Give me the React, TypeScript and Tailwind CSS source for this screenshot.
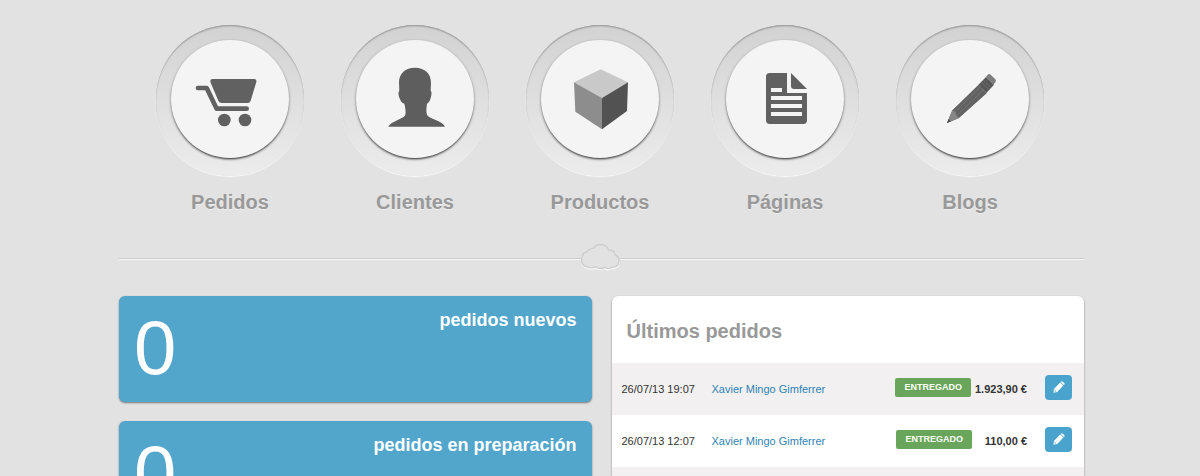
import type { ReactNode } from 'react';

const CartIcon = () => (
  <svg viewBox="63 75 354 354" className="w-full" fill="#616161" aria-hidden="true">
    <path d="M188 192H312Q321 192 319 201L302 257Q300 264 293 264H215Q208 264 205 257L182 203Q178 192 188 192Z" />
    <path
      d="M144 219H170L200 281H290"
      fill="none"
      stroke="#616161"
      strokeWidth="14"
      strokeLinecap="round"
      strokeLinejoin="round"
    />
    <circle cx="223" cy="315" r="19" />
    <circle cx="285" cy="315" r="19" />
  </svg>
);

const PersonIcon = () => (
  <svg viewBox="63 75 354 354" className="w-full" fill="#5e5e5e" aria-hidden="true">
    <path d="M240 158C270 158 289 177 288 205L287 228C291 230 290 240 287 249C285 259 280 264 276 266C274 280 273 290 276 299C281 312 322 316 330 335H160C168 318 205 313 211 300C213 290 211 278 208 266C201 264 196 257 193 248C190 239 189 231 193 228L192 202C192 176 211 158 240 158Z" />
  </svg>
);

const BoxIcon = () => (
  <svg viewBox="63 75 354 354" className="w-full" aria-hidden="true">
    <path d="M242 163L324 202L246 249L162 202Z" fill="#c9c9c9" />
    <path d="M162 202L246 249V343L166 290Z" fill="#8d8d8d" />
    <path d="M324 202L246 249V343L321 288Z" fill="#525252" />
  </svg>
);

const PageIcon = () => (
  <svg viewBox="78 75 354 354" className="w-full" aria-hidden="true">
    <path d="M209 174H261V234H321V316Q321 327 310 327H209Q198 327 198 316V185Q198 174 209 174Z" fill="#616161" />
    <path d="M273 174L321 222H282Q273 222 273 213Z" fill="#616161" />
    <path d="M213 219H246V231H213ZM213 243H306V255H213ZM213 267H306V279H213ZM213 291H306V303H213Z" fill="#f4f4f4" />
  </svg>
);

const PencilIcon = () => (
  <svg viewBox="78 75 354 354" className="w-full" aria-hidden="true">
    <path d="M186 324L202 286L280 210L305 235L222 309Z" fill="#626262" />
    <path d="M186 324L202 286L211 290L214 301L222 309Z" fill="#868686" />
    <path d="M186 324L191 312L198 319Z" fill="#505050" />
    <path d="M279 211L303 186L327 209L304 234Z" fill="#575757" />
    <path d="M303 186L308 179Q312 175 317 179L331 193Q335 198 331 202L325 209Z" fill="#7d7d7d" />
    <path d="M211 290L286 216M216 301L296 224M289 201L311 223M295 195L317 217M280 210L304 233" stroke="#7c7c7c" strokeWidth="2" fill="none" />
  </svg>
);

const sections: { label: string; icon: ReactNode }[] = [
  { label: 'Pedidos', icon: <CartIcon /> },
  { label: 'Clientes', icon: <PersonIcon /> },
  { label: 'Productos', icon: <BoxIcon /> },
  { label: 'Páginas', icon: <PageIcon /> },
  { label: 'Blogs', icon: <PencilIcon /> },
];

const counters = [
  { label: 'pedidos nuevos', value: 0 },
  { label: 'pedidos en preparación', value: 0 },
];

const orders = [
  { date: '26/07/13 19:07', customer: 'Xavier Mingo Gimferrer', status: 'ENTREGADO', total: '1.923,90 €' },
  { date: '26/07/13 12:07', customer: 'Xavier Mingo Gimferrer', status: 'ENTREGADO', total: '110,00 €' },
];

const cloudPath =
  'M78 95C57 91 57 56 80 50C86 38 97 42 101 38C108 25 136 24 145 46C157 44 164 53 163 60C182 66 178 97 154 97C146 102 138 102 132 97C124 102 112 102 106 95C98 99 86 99 78 95Z';

const Divider = () => (
  <div className="flex items-center" role="separator">
    <div className="h-0.5 flex-1 border-t border-[#cbcbcb] bg-[#f5f5f5]" />
    <svg viewBox="67 30 114 84" className="h-7 w-[38px] overflow-visible" fill="none" aria-hidden="true">
      <path d={cloudPath} stroke="#f8f8f8" strokeWidth="5" transform="translate(0 3)" />
      <path d={cloudPath} fill="#e2e2e2" stroke="#cccccc" strokeWidth="4" />
    </svg>
    <div className="h-0.5 flex-1 border-t border-[#cbcbcb] bg-[#f5f5f5]" />
  </div>
);

const OrdersPanel = () => (
  <section className="overflow-hidden rounded-md bg-white shadow-[0_1px_2px_#777]">
    <h2 className="px-[15px] pt-5 pb-[17px] text-[20px] leading-[30px] font-bold text-[#999]">Últimos pedidos</h2>
    <table className="w-full border-collapse text-[11px] leading-4">
      <tbody>
        {orders.map((order) => (
          <tr key={order.date} className="h-[52px] odd:bg-[#f2f0f1]">
            <td className="w-[100px] pl-2.5 whitespace-nowrap text-[#333]">{order.date}</td>
            <td>
              <a href="#cliente" className="text-[#2f83b5]">
                {order.customer}
              </a>
            </td>
            <td className="font-bold whitespace-nowrap text-[#333]">
              <div className="flex items-center justify-end gap-1">
                <span className="mb-1 rounded-xs bg-[#69a65b] px-[9px] text-[9px] leading-[19px] text-white">
                  {order.status}
                </span>
                <span className="min-w-[51px] text-right">{order.total}</span>
              </div>
            </td>
            <td className="w-[57px] pr-3 pb-1">
              <button
                type="button"
                aria-label="Editar pedido"
                className="ml-auto flex h-[25px] w-[27px] items-center justify-center rounded bg-[#4aa3cc]"
              >
                <svg viewBox="0 0 12 12" className="size-3" fill="#fff" aria-hidden="true">
                  <path d="M0.500 11.800L0.900 7.900L7.200 1.400L10.400 4.600L4.200 11.100ZM7.700 0.900L8.300 0.400Q8.900 -0.100 9.500 0.400L11.400 2.300Q11.900 2.900 11.400 3.500L10.900 4.100Z" />
                  <path d="M1.400 9L3.100 10.700" stroke="#4aa3cc" strokeWidth="0.900" />
                </svg>
              </button>
            </td>
          </tr>
        ))}
        <tr className="h-[52px] odd:bg-[#f2f0f1]">
          <td colSpan={4} />
        </tr>
      </tbody>
    </table>
  </section>
);

const App = () => {
  return (
    <main className="h-screen overflow-hidden bg-[#e2e2e2] font-['Liberation_Sans',Arial,sans-serif]">
      <nav className="pt-[25px]">
        <ul className="flex justify-center gap-[37px]">
          {sections.map((section) => (
            <li key={section.label}>
              <a href="#seccion" className="block w-[148px] text-center">
                <span className="block rounded-full bg-linear-to-b from-[#d2d2d2] to-[#ececec] px-[15px] pt-[15px] pb-[18px] shadow-[inset_0_2px_2px_-1px_#999,inset_0_1px_1px_#bbb,0_1px_1px_#fafafa]">
                  <span className="block size-[118px] rounded-full bg-[#f4f4f4] shadow-[0_2px_2px_-1px_#444,0_1px_3px_#888]">
                    {section.icon}
                  </span>
                </span>
                <span className="mt-[11px] block text-[20px] leading-[30px] font-bold text-[#999] [text-shadow:0_1px_0_#eee]">
                  {section.label}
                </span>
              </a>
            </li>
          ))}
        </ul>
      </nav>

      <div className="pl-[3px]">
        <div className="mx-auto max-w-[965px]">
          <div className="pt-7 pb-[23px]">
            <Divider />
          </div>

          <div className="grid grid-cols-2 items-start gap-5">
            <div className="flex flex-col gap-[19px]">
              {counters.map((counter) => (
                <section
                  key={counter.label}
                  className="flex h-[106px] items-start justify-between rounded-md bg-[#52a5cb] px-[15px] text-white shadow-[0_1px_2px_#777]"
                >
                  <p className="pt-3 text-[76px] leading-20">{counter.value}</p>
                  <h3 className="pt-3 text-[18px] leading-6 font-bold">{counter.label}</h3>
                </section>
              ))}
            </div>
            <OrdersPanel />
          </div>
        </div>
      </div>
    </main>
  );
};

export default App;
